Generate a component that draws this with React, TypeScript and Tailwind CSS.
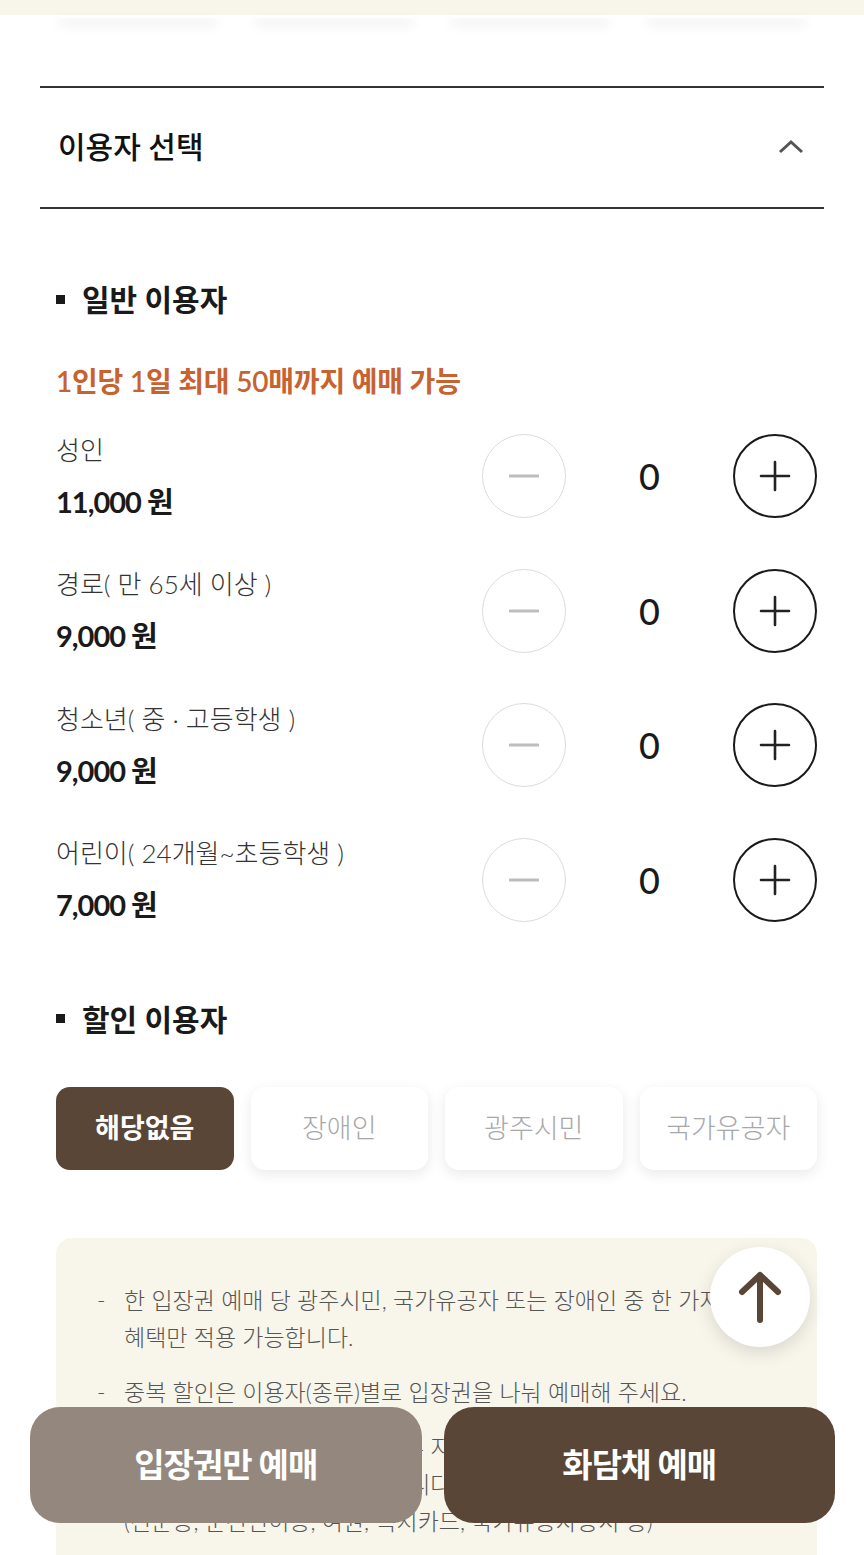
import { useState } from "react";

const font = { fontFamily: "Lato, 'Noto Sans CJK KR', sans-serif" };

const generalUsers = [
  { label: "성인", price: "11,000 원" },
  { label: "경로( 만 65세 이상 )", price: "9,000 원" },
  { label: "청소년( 중 · 고등학생 )", price: "9,000 원" },
  { label: "어린이( 24개월~초등학생 )", price: "7,000 원" },
];

const discounts = ["해당없음", "장애인", "광주시민", "국가유공자"];

function Counter({ value, onChange }: { value: number; onChange: (v: number) => void }) {
  return (
    <div className="flex items-center">
      <button
        className="w-[84px] h-[84px] rounded-full border-[1.5px] border-[#dcdcdc] flex items-center justify-center"
        onClick={() => onChange(Math.max(0, value - 1))}
      >
        <svg width="30" height="6" viewBox="0 0 30 6">
          <line x1="1" y1="3" x2="29" y2="3" stroke="#bdbdbd" strokeWidth="3" strokeLinecap="round" />
        </svg>
      </button>
      <div className="w-[167px] text-center text-[36px] leading-none font-medium text-[#1a1a1a]">{value}</div>
      <button
        className="w-[84px] h-[84px] rounded-full border-2 border-[#1a1a1a] flex items-center justify-center"
        onClick={() => onChange(value + 1)}
      >
        <svg width="32" height="32" viewBox="0 0 32 32">
          <path d="M16 2v28M2 16h28" stroke="#222" strokeWidth="2.6" strokeLinecap="round" />
        </svg>
      </button>
    </div>
  );
}

function SubTitle({ children }: { children: React.ReactNode }) {
  return (
    <div className="flex items-center gap-[17px]">
      <span className="w-[9px] h-[9px] bg-[#1a1a1a]" />
      <h3 className="text-[30px] leading-none font-bold text-[#1a1a1a]">{children}</h3>
    </div>
  );
}

export default function App() {
  const [counts, setCounts] = useState([0, 0, 0, 0]);
  const [picked, setPicked] = useState(0);

  return (
    <div className="relative w-full h-[1555px] overflow-hidden bg-white" style={font}>
      {/* tail of previous section */}
      <div className="h-[15px] bg-[#f8f5eb]" />
      <div className="grid grid-cols-4 gap-[35px] px-[58px] pr-[57px]">
        {[0, 1, 2, 3].map((i) => (
          <div key={i} className="h-[3px] rounded-b-[6px] bg-white shadow-[0_6px_12px_rgba(0,0,0,0.14)]" />
        ))}
      </div>

      {/* accordion header */}
      <div className="mx-[40px] mt-[68px] border-t-2 border-b-2 border-[#333] h-[123px] flex items-center justify-between pl-[18px] pr-[20px]">
        <h2 className="text-[30px] leading-none font-medium text-[#111] mb-[4px]">이용자 선택</h2>
        <svg width="26" height="15" viewBox="0 0 26 15" className="mb-[2px]">
          <polyline points="2,13 13,3 24,13" fill="none" stroke="#555" strokeWidth="3" />
        </svg>
      </div>

      <div className="pl-[56px] pr-[47px]">
        <div className="mt-[75px]">
          <SubTitle>일반 이용자</SubTitle>
        </div>
        <p className="mt-[53px] text-[28px] leading-none font-semibold text-[#c8622f] tracking-[-0.2px]">
          1인당 1일 최대 50매까지 예매 가능
        </p>

        <div className="mt-[39px] flex flex-col gap-[50.5px]">
          {generalUsers.map((u, i) => (
            <div key={u.label} className="h-[84px] flex items-center justify-between">
              <div className="flex flex-col gap-[24px]">
                <span className="text-[26px] leading-none font-light text-[#333]">{u.label}</span>
                <span className="text-[29px] leading-none font-bold text-[#1a1a1a] tracking-[-1px]">{u.price}</span>
              </div>
              <Counter
                value={counts[i]}
                onChange={(v) => setCounts((c) => c.map((x, j) => (j === i ? v : x)))}
              />
            </div>
          ))}
        </div>

        <div className="mt-[82px]">
          <SubTitle>할인 이용자</SubTitle>
        </div>

        <div className="mt-[53px] grid grid-cols-4 gap-[17px]">
          {discounts.map((d, i) => (
            <button
              key={d}
              onClick={() => setPicked(i)}
              className={
                i === picked
                  ? "h-[83px] rounded-[14px] bg-[#594636] text-white text-[27px] font-bold"
                  : "h-[83px] rounded-[14px] bg-white text-[#a8a8a8] text-[27px] font-light shadow-[0_4px_14px_rgba(0,0,0,0.09)]"
              }
            >
              {d}
            </button>
          ))}
        </div>

        <div className="mt-[68px] rounded-[16px] bg-[#f8f5eb] pl-[41px] pr-[40px] pt-[44px] pb-[60px] text-[23px] leading-[37px] font-light text-[#555] break-keep">
          <ul className="flex flex-col gap-[18px]">
            <li className="flex">
              <span className="w-[27px] shrink-0">-</span>
              <span>한 입장권 예매 당 광주시민, 국가유공자 또는 장애인 중 한 가지 혜택만 적용 가능합니다.</span>
            </li>
            <li className="flex">
              <span className="w-[27px] shrink-0">-</span>
              <span>중복 할인은 이용자(종류)별로 입장권을 나눠 예매해 주세요.</span>
            </li>
            <li className="flex">
              <span className="w-[27px] shrink-0">-</span>
              <span>
                할인 대상자는 입장 시 증빙서류 지참 필수이며, 미지참 시 현장에서 차액 결제 조치가 있을 수 있습니다.
                <br />
                (신분증, 운전면허증, 여권, 복지카드, 국가유공자증서 등)
              </span>
            </li>
          </ul>
        </div>
      </div>

      {/* scroll to top */}
      <button className="absolute top-[1247px] right-[54px] w-[100px] h-[100px] rounded-full bg-white shadow-[0_6px_18px_rgba(0,0,0,0.12)] flex items-center justify-center">
        <svg width="44" height="54" viewBox="0 0 44 54">
          <path d="M22 50V5M4 22L22 5l18 17" fill="none" stroke="#594636" strokeWidth="6" strokeLinecap="round" strokeLinejoin="round" />
        </svg>
      </button>

      {/* bottom action bar */}
      <div className="absolute left-[30px] right-[29px] bottom-[32px] flex gap-[22px]">
        <button className="flex-1 h-[116px] rounded-[30px] bg-[#94877d] text-white text-[33px] font-bold tracking-[-1px]">
          입장권만 예매
        </button>
        <button className="flex-1 h-[116px] rounded-[30px] bg-[#594636] text-white text-[33px] font-bold tracking-[-1px]">
          화담채 예매
        </button>
      </div>
    </div>
  );
}
